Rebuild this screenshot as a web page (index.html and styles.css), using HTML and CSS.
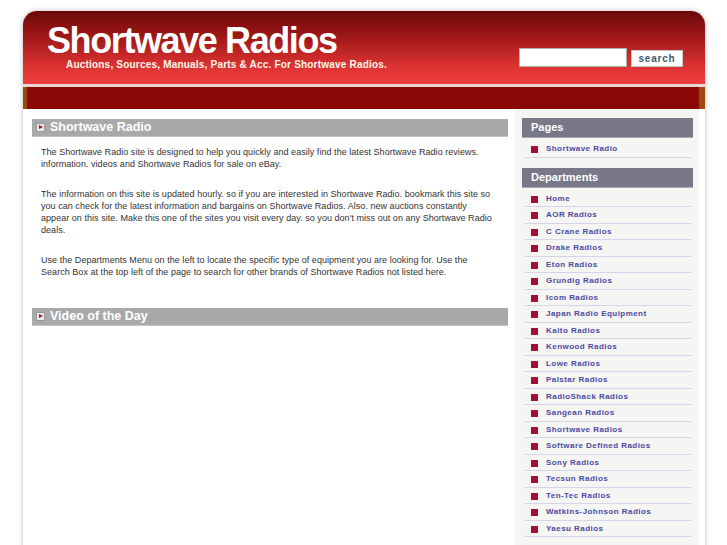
FILE: index.html
```html
<!DOCTYPE html>
<html>
<head>
<meta charset="utf-8">
<link rel="stylesheet" href="styles.css">
</head>
<body>
<div class="page">
  <header class="header">
    <div class="brand">
      <div class="title">Shortwave Radios</div>
      <div class="tagline">Auctions, Sources, Manuals, Parts &amp; Acc. For Shortwave Radios.</div>
    </div>
    <form class="search">
      <input class="search-input" type="text">
      <button class="search-btn" type="button">search</button>
    </form>
  </header>
  <div class="sep"></div>
  <nav class="nav"></nav>
  <div class="content">
    <main class="main">
      <h2 class="box-title"><span class="arrow"></span>Shortwave Radio</h2>
      <div class="text">
        <p>The Shortwave Radio site is designed to help you quickly and easily find the latest Shortwave Radio reviews.<br>information. videos and Shortwave Radios for sale on eBay.</p>
        <p>The information on this site is updated hourly. so if you are interested in Shortwave Radio. bookmark this site so<br>you can check for the latest information and bargains on Shortwave Radios. Also. new auctions constantly<br>appear on this site. Make this one of the sites you visit every day. so you don't miss out on any Shortwave Radio<br>deals.</p>
        <p>Use the Departments Menu on the left to locate the specific type of equipment you are looking for. Use the<br>Search Box at the top left of the page to search for other brands of Shortwave Radios not listed here.</p>
      </div>
      <h2 class="box-title video"><span class="arrow"></span>Video of the Day</h2>
    </main>
    <aside class="side">
      <h3 class="side-title">Pages</h3>
      <ul class="side-list">
        <li><span class="dot"></span><a>Shortwave Radio</a></li>
      </ul>
      <h3 class="side-title">Departments</h3>
      <ul class="side-list">
        <li><span class="dot"></span><a>Home</a></li>
        <li><span class="dot"></span><a>AOR Radios</a></li>
        <li><span class="dot"></span><a>C Crane Radios</a></li>
        <li><span class="dot"></span><a>Drake Radios</a></li>
        <li><span class="dot"></span><a>Eton Radios</a></li>
        <li><span class="dot"></span><a>Grundig Radios</a></li>
        <li><span class="dot"></span><a>Icom Radios</a></li>
        <li><span class="dot"></span><a>Japan Radio Equipment</a></li>
        <li><span class="dot"></span><a>Kaito Radios</a></li>
        <li><span class="dot"></span><a>Kenwood Radios</a></li>
        <li><span class="dot"></span><a>Lowe Radios</a></li>
        <li><span class="dot"></span><a>Palstar Radios</a></li>
        <li><span class="dot"></span><a>RadioShack Radios</a></li>
        <li><span class="dot"></span><a>Sangean Radios</a></li>
        <li><span class="dot"></span><a>Shortwave Radios</a></li>
        <li><span class="dot"></span><a>Software Defined Radios</a></li>
        <li><span class="dot"></span><a>Sony Radios</a></li>
        <li><span class="dot"></span><a>Tecsun Radios</a></li>
        <li><span class="dot"></span><a>Ten-Tec Radios</a></li>
        <li><span class="dot"></span><a>Watkins-Johnson Radios</a></li>
        <li><span class="dot"></span><a>Yaesu Radios</a></li>
      </ul>
    </aside>
  </div>
</div>
</body>
</html>
```
FILE: styles.css
```css
html, body {
  margin: 0;
  padding: 0;
  background: #ffffff;
}
body {
  font-family: "Liberation Sans", Arial, sans-serif;
}
.page {
  margin: 11px 0 0 23px;
  width: 682px;
  min-height: 540px;
  background: #ffffff;
  border-radius: 14px 14px 0 0;
  box-shadow: 0 0 5px rgba(0,0,0,0.28);
  overflow: hidden;
}
.header {
  height: 73px;
  background: linear-gradient(to bottom, #6c0808 0%, #a61a1a 40%, #dc3232 75%, #f23e3e 100%);
  display: flex;
  justify-content: space-between;
  align-items: flex-start;
}
.brand {
  padding: 13px 0 0 24px;
}
.title {
  font-size: 36px;
  line-height: 34px;
  font-weight: bold;
  color: #ffffff;
  letter-spacing: -1.4px;
}
.tagline {
  margin: 1px 0 0 19px;
  font-size: 10px;
  line-height: 11px;
  font-weight: bold;
  color: #fff8ee;
  letter-spacing: 0.2px;
}
.search {
  display: flex;
  align-items: flex-end;
  gap: 4px;
  margin: 37px 22px 0 0;
}
.search-input {
  width: 108px;
  height: 19px;
  box-sizing: border-box;
  border: 1px solid #b0b0b0;
  background: #ffffff;
  padding: 0;
  margin: 0;
}
.search-btn {
  width: 52px;
  height: 17px;
  box-sizing: border-box;
  border: 1px solid #c8c8c8;
  background: #ffffff;
  padding: 0;
  margin: 0;
  font-family: "Liberation Sans", Arial, sans-serif;
  font-size: 10px;
  font-weight: bold;
  color: #3a5c6c;
  letter-spacing: 0.8px;
}
.sep {
  height: 3px;
  background: #e6d6d6;
}
.nav {
  height: 22px;
  background: #8b0808;
  border-left: 4px solid #9c4a0c;
  border-right: 6px solid #9c4a0c;
}
.content {
  display: flex;
  align-items: flex-start;
}
.main {
  width: 476px;
  margin: 10px 0 0 9px;
}
.box-title {
  margin: 0;
  height: 17px;
  background: #a9a9a9;
  border-bottom: 1px solid #c4c4c4;
  color: #ffffff;
  font-size: 12.5px;
  line-height: 17px;
  font-weight: bold;
  display: flex;
  align-items: center;
}
.arrow {
  width: 7px;
  height: 7px;
  margin: 0 5px 0 4px;
  background: #e8e8e8;
  border: 1px solid #9a9a9a;
  position: relative;
}
.arrow::after {
  content: "";
  position: absolute;
  left: 2px;
  top: 1px;
  border-left: 4px solid #b01010;
  border-top: 2.5px solid transparent;
  border-bottom: 2.5px solid transparent;
}
.text {
  padding: 9px 0 0 9px;
  color: #333333;
  font-size: 9px;
  letter-spacing: 0.04px;
  line-height: 12.3px;
  white-space: nowrap;
}
.text p {
  margin: 0 0 17px 0;
}
.box-title.video {
  margin-top: 30px;
}
.side {
  width: 171px;
  margin-left: 7px;
  background: #f5f5f3;
  padding: 9px 6px 20px 7px;
  min-height: 420px;
}
.side-title {
  margin: 0;
  height: 19px;
  line-height: 19px;
  background: #787889;
  color: #ffffff;
  font-size: 11px;
  font-weight: bold;
  padding-left: 9px;
  border-bottom: 1px solid #a8a8b8;
}
.side-list {
  list-style: none;
  margin: 3px 1px 10px 2px;
  padding: 0;
}
.side-list li {
  height: 15.5px;
  border-bottom: 1px solid #d4d4ea;
  display: flex;
  align-items: center;
}
.dot {
  width: 7px;
  height: 7px;
  background: #a40f38;
  margin: 2px 8px 0 7px;
  flex: none;
}
.side-list a {
  font-size: 8px;
  font-weight: bold;
  color: #4a4aa2;
  letter-spacing: 0.45px;
}
```
